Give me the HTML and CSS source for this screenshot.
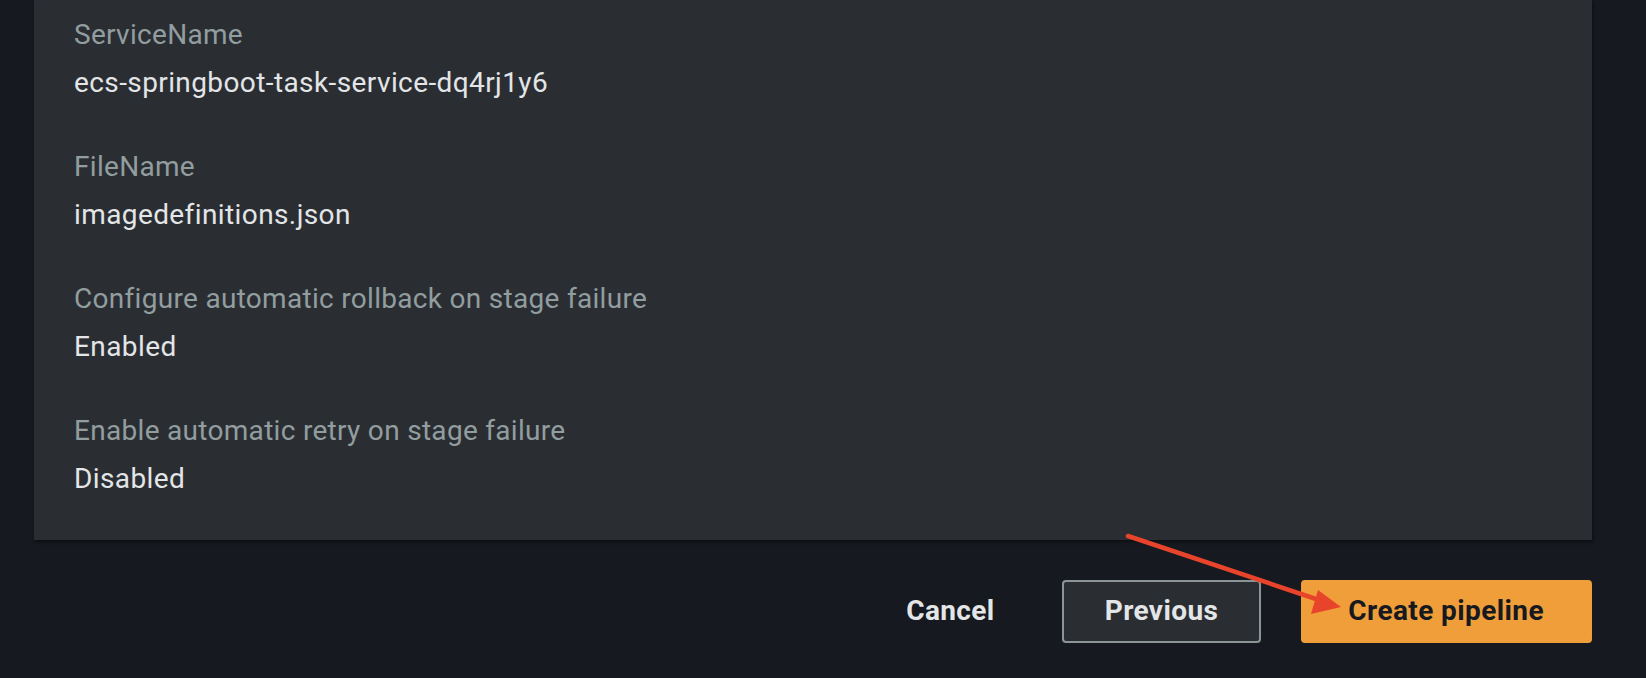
FILE: index.html
```html
<!DOCTYPE html>
<html lang="en">
<head>
<meta charset="utf-8">
<title>Review</title>
<link rel="stylesheet" href="styles.css">
</head>
<body>
<div class="page">
  <div class="card">
    <dl class="kv">
      <div class="kv-item">
        <dt class="kv-label">ServiceName</dt>
        <dd class="kv-value">ecs-springboot-task-service-dq4rj1y6</dd>
      </div>
      <div class="kv-item">
        <dt class="kv-label">FileName</dt>
        <dd class="kv-value">imagedefinitions.json</dd>
      </div>
      <div class="kv-item">
        <dt class="kv-label">Configure automatic rollback on stage failure</dt>
        <dd class="kv-value">Enabled</dd>
      </div>
      <div class="kv-item">
        <dt class="kv-label">Enable automatic retry on stage failure</dt>
        <dd class="kv-value">Disabled</dd>
      </div>
    </dl>
  </div>
  <div class="actions">
    <button class="btn btn-link">Cancel</button>
    <button class="btn btn-normal">Previous</button>
    <button class="btn btn-primary">Create pipeline</button>
  </div>
</div>
<svg class="annotation" width="1646" height="678" viewBox="0 0 1646 678" aria-hidden="true">
  <line x1="1128" y1="536" x2="1322" y2="601" stroke="#e8432b" stroke-width="4.5" stroke-linecap="round"/>
  <polygon points="1341,607 1311,614 1318,590" fill="#e8432b"/>
</svg>
</body>
</html>
```

FILE: styles.css
```css
html, body {
  margin: 0;
  padding: 0;
}
body {
  background: #16191f;
  font-family: Roboto, "Liberation Sans", sans-serif;
  width: 1646px;
  height: 678px;
  overflow: hidden;
  position: relative;
}
.page {
  padding: 0 54px 0 34px;
}
.card {
  background: #2a2e33;
  padding: 13px 40px 39px 40px;
  box-shadow: 1px 2px 3px rgba(0, 0, 0, 0.45);
}
.kv {
  margin: 0;
  display: flex;
  flex-direction: column;
  gap: 40px;
}
.kv-item {
  display: flex;
  flex-direction: column;
}
.kv-label {
  font-size: 28px;
  line-height: 44px;
  letter-spacing: 0.3px;
  color: #929d9f;
  padding-bottom: 4px;
}
.kv-value {
  margin: 0;
  font-size: 28px;
  line-height: 44px;
  letter-spacing: 0.4px;
  color: #e3e5e7;
}
.actions {
  display: flex;
  justify-content: flex-end;
  align-items: center;
  margin-top: 40px;
}
.btn {
  font-family: Roboto, "Liberation Sans", sans-serif;
  font-weight: 700;
  font-size: 28px;
  line-height: 44px;
  letter-spacing: 0.4px;
  border-radius: 4px;
  border: 2px solid transparent;
  padding: 7px 41px 8px;
  cursor: pointer;
}
.btn-link {
  background: transparent;
  color: #e3e5e7;
  padding-left: 0;
  padding-right: 0;
  margin-right: 65px;
}
.btn-normal {
  background: #2a2e33;
  border-color: #8b9596;
  color: #e3e5e7;
  margin-right: 40px;
}
.btn-primary {
  background: #f09e39;
  border-color: #f09e39;
  color: #16191f;
  padding-left: 45px;
  padding-right: 46px;
}
.annotation {
  position: absolute;
  left: 0;
  top: 0;
  pointer-events: none;
}
```
